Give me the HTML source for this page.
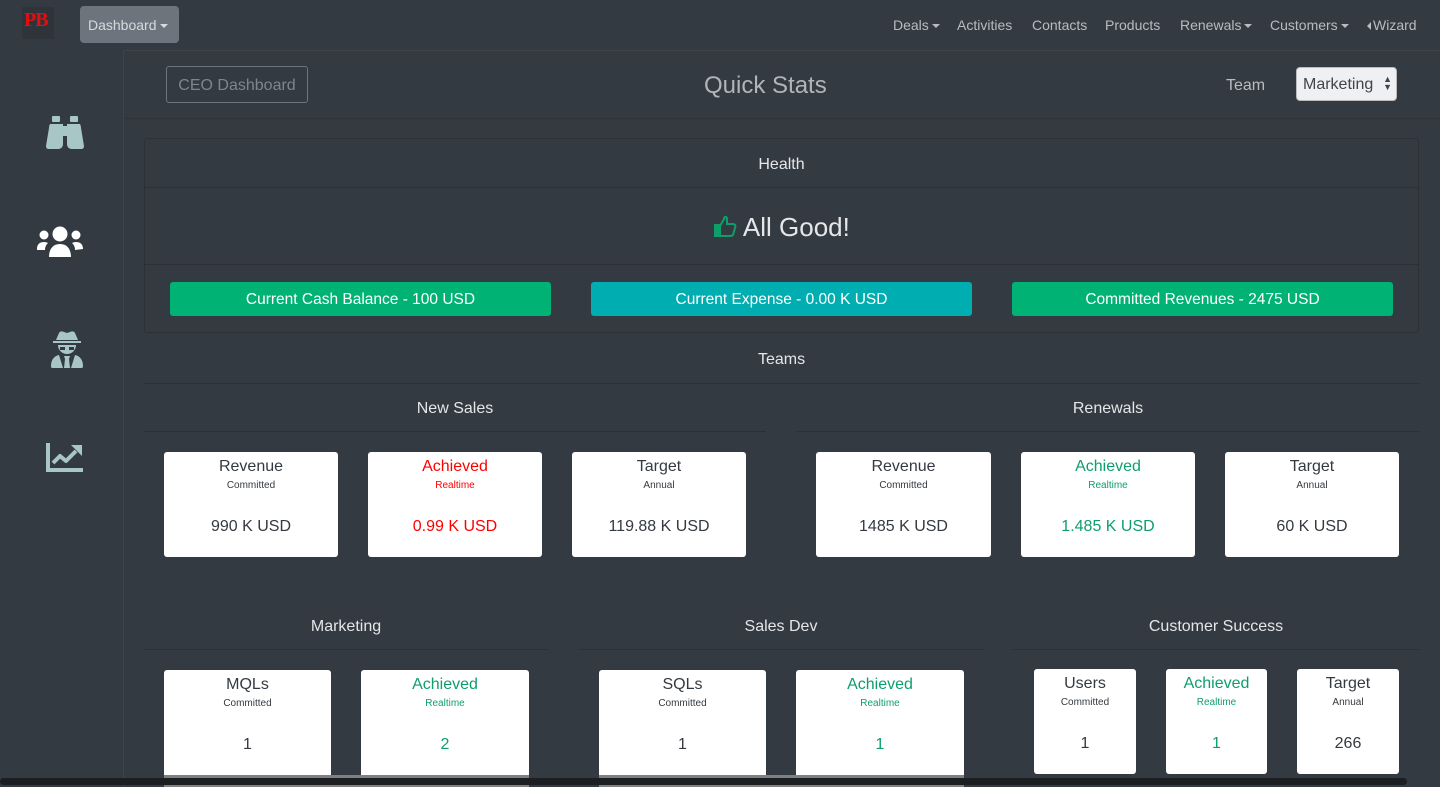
<!DOCTYPE html>
<html><head><meta charset="utf-8"><style>
*{box-sizing:border-box;margin:0;padding:0}
body{width:1440px;height:787px;overflow:hidden;background:#343a42;font-family:"Liberation Sans",sans-serif;color:#e4e6e8;position:relative}
.a{position:absolute}
.nav a{position:absolute;top:17px;font-size:14px;color:#b8bcc0}
.c{text-align:center}
.card{position:absolute;background:#fff;border-radius:3px;text-align:center;color:#343a40}
.card .t{font-size:16px;margin-top:6px;line-height:18px}
.card .s{font-size:10px;margin-top:3px;line-height:13px}
.card .v{font-size:16px;margin-top:26px}
.g{color:#0e9e6a}.r{color:#f00}
.line{position:absolute;height:1px;background:#2b3036}
.btn{position:absolute;height:34px;border-radius:3px;color:#fff;font-size:15.5px;text-align:center;line-height:36px}
.car{display:inline-block;width:0;height:0;border-left:4px solid transparent;border-right:4px solid transparent;border-top:4px solid currentColor;vertical-align:middle;margin-left:3px}
</style></head><body>
<div class="a" style="left:22px;top:7px;width:32px;height:32px;background:#2f343a"></div>
<div class="a" style="left:24px;top:9px;font-family:'Liberation Serif',serif;font-weight:bold;font-size:20px;color:#e01010;letter-spacing:-1px">PB</div>
<div class="a" style="left:80px;top:6px;width:99px;height:37px;background:#6c757d;border-radius:4px;color:#d8dadc;font-size:14px;line-height:38px;padding-left:8px">Dashboard<span class="car"></span></div>
<div class="nav">
<a style="left:893px">Deals<span class="car"></span></a>
<a style="left:957px">Activities</a>
<a style="left:1032px">Contacts</a>
<a style="left:1105px">Products</a>
<a style="left:1180px">Renewals<span class="car"></span></a>
<a style="left:1270px">Customers<span class="car"></span></a>
<a style="left:1367px"><span style="display:inline-block;border-top:4px solid transparent;border-bottom:4px solid transparent;border-right:4px solid #b8bcc0;vertical-align:middle;margin-right:2px"></span>Wizard</a>
</div>
<div class="a" style="left:123px;top:50px;width:1317px;height:1px;background:#3f4449"></div>
<div class="a" style="left:123px;top:50px;width:1px;height:737px;background:#3f4449"></div>
<svg class="a" style="left:46px;top:116px" width="38" height="34" viewBox="0 0 38 34" fill="#a9c6c6"><rect x="6" y="0" width="8" height="6" rx="1"/><rect x="24" y="0" width="8" height="6" rx="1"/><path d="M4 8h13v20c0 3-2 5-5 5H3c-2 0-3-1-3-3l3-18c0-2 1-4 1-4zM21 8h13s1 2 1 4l3 18c0 2-1 3-3 3h-9c-3 0-5-2-5-5z"/><rect x="16" y="10" width="6" height="10"/></svg>
<svg class="a" style="left:37px;top:225px" width="46" height="34" viewBox="0 0 46 34" fill="#fff"><circle cx="23" cy="9" r="7.5"/><circle cx="7" cy="10" r="4.5"/><circle cx="39" cy="10" r="4.5"/><path d="M12 32c0-8 4-13 11-13s11 5 11 13zM0 24c0-5 3-7 7-7 2 0 3 .5 4 1-2 2-3 4-3 7H0zM46 24c0-5-3-7-7-7-2 0-3 .5-4 1 2 2 3 4 3 7z"/></svg>
<svg class="a" style="left:51px;top:331px" width="32" height="37" viewBox="0 0 32 37" fill="#a9c6c6"><path d="M5 9h22l-3-7c-1-2-3-2-5-1l-3 1-3-1c-2-1-4-1-5 1zM2 10h28v2H2z"/><path d="M7 14h18c0 5-4 9-9 9s-9-4-9-9z"/><path d="M2 37c-2 0-2-1-2-2 0-6 3-10 8-11l4 13zM30 37c2 0 2-1 2-2 0-6-3-10-8-11l-4 13zM13 25h6l-1 3 1 9h-6l1-9z"/><rect x="9" y="16" width="5" height="3" fill="#343a42"/><rect x="18" y="16" width="5" height="3" fill="#343a42"/></svg>
<svg class="a" style="left:46px;top:443px" width="37" height="29" viewBox="0 0 37 29"><path d="M2 0v27h35" stroke="#a9c6c6" stroke-width="4" fill="none"/><path d="M7 20l7-7 6 5 10-10" stroke="#a9c6c6" stroke-width="4" fill="none" stroke-linejoin="round"/><path d="M25 2h11v11z" fill="#a9c6c6"/></svg>
<div class="a" style="left:166px;top:66px;width:142px;height:37px;border:1px solid #6c757d;border-radius:3px;color:#7e858c;font-size:16px;line-height:37px;text-align:center">CEO Dashboard</div>
<div class="a" style="left:704px;top:72px;font-size:24px;color:#b0b5ba">Quick Stats</div>
<div class="a" style="left:1226px;top:77px;font-size:16px;color:#b8bcc0">Team</div>
<div class="a" style="left:1296px;top:67px;width:101px;height:34px;background:#eef0f3;border:1px solid #bbb;border-radius:4px;color:#444;font-size:16px;line-height:34px;padding-left:6px">Marketing<span style="position:absolute;right:4px;top:7px;font-size:9px;line-height:8px">▲<br>▼</span></div>
<div class="line" style="left:124px;top:118px;width:1316px;background:#2e3338"></div>
<div class="a" style="left:144px;top:138px;width:1275px;height:195px;border:1px solid #2c3136;border-radius:3px"></div>
<div class="a c" style="left:144px;top:156px;width:1275px;font-size:16px">Health</div>
<div class="line" style="left:144px;top:187px;width:1275px"></div>
<div class="a c" style="left:144px;top:212px;width:1275px;font-size:26px"><svg width="24" height="24" viewBox="0 0 24 24" style="vertical-align:-2px"><path d="M2 11h5v11H2zM7 12l4-7c0-3 3-3 3 0v5h6c2 0 3 2 2 4l-2 7c-1 1-2 1-3 1H7" fill="none" stroke="#0e9e6a" stroke-width="2"/><rect x="2" y="11" width="5" height="11" fill="#0e9e6a"/></svg> All Good!</div>
<div class="line" style="left:144px;top:264px;width:1275px"></div>
<div class="btn" style="left:170px;top:282px;width:381px;background:#00b274">Current Cash Balance - 100 USD</div>
<div class="btn" style="left:591px;top:282px;width:381px;background:#00adb0">Current Expense - 0.00 K USD</div>
<div class="btn" style="left:1012px;top:282px;width:381px;background:#00b274">Committed Revenues - 2475 USD</div>
<div class="a c" style="left:144px;top:351px;width:1275px;font-size:16px">Teams</div>
<div class="line" style="left:144px;top:383px;width:1275px"></div>
<div class="a c" style="left:144px;top:400px;width:622px;font-size:16px">New Sales</div>
<div class="a c" style="left:797px;top:400px;width:622px;font-size:16px">Renewals</div>
<div class="line" style="left:144px;top:431px;width:622px"></div>
<div class="line" style="left:797px;top:431px;width:622px"></div>
<div class="card" style="left:164px;top:452px;width:174px;height:105px"><div class="t">Revenue</div><div class="s">Committed</div><div class="v">990 K USD</div></div>
<div class="card r" style="left:368px;top:452px;width:174px;height:105px"><div class="t">Achieved</div><div class="s">Realtime</div><div class="v">0.99 K USD</div></div>
<div class="card" style="left:572px;top:452px;width:174px;height:105px"><div class="t">Target</div><div class="s">Annual</div><div class="v">119.88 K USD</div></div>
<div class="card" style="left:816px;top:452px;width:175px;height:105px"><div class="t">Revenue</div><div class="s">Committed</div><div class="v">1485 K USD</div></div>
<div class="card g" style="left:1021px;top:452px;width:174px;height:105px"><div class="t">Achieved</div><div class="s">Realtime</div><div class="v">1.485 K USD</div></div>
<div class="card" style="left:1225px;top:452px;width:174px;height:105px"><div class="t">Target</div><div class="s">Annual</div><div class="v">60 K USD</div></div>
<div class="a c" style="left:144px;top:618px;width:404px;font-size:16px">Marketing</div>
<div class="a c" style="left:579px;top:618px;width:404px;font-size:16px">Sales Dev</div>
<div class="a c" style="left:1013px;top:618px;width:406px;font-size:16px">Customer Success</div>
<div class="line" style="left:144px;top:649px;width:404px"></div>
<div class="line" style="left:579px;top:649px;width:404px"></div>
<div class="line" style="left:1013px;top:649px;width:406px"></div>
<div class="card" style="left:164px;top:670px;width:167px;height:110px"><div class="t">MQLs</div><div class="s">Committed</div><div class="v">1</div></div>
<div class="card g" style="left:361px;top:670px;width:168px;height:110px"><div class="t">Achieved</div><div class="s">Realtime</div><div class="v">2</div></div>
<div class="card" style="left:599px;top:670px;width:167px;height:110px"><div class="t">SQLs</div><div class="s">Committed</div><div class="v">1</div></div>
<div class="card g" style="left:796px;top:670px;width:168px;height:110px"><div class="t">Achieved</div><div class="s">Realtime</div><div class="v">1</div></div>
<div class="card" style="left:1034px;top:669px;width:102px;height:105px"><div class="t">Users</div><div class="s">Committed</div><div class="v">1</div></div>
<div class="card g" style="left:1166px;top:669px;width:101px;height:105px"><div class="t">Achieved</div><div class="s">Realtime</div><div class="v">1</div></div>
<div class="card" style="left:1297px;top:669px;width:102px;height:105px"><div class="t">Target</div><div class="s">Annual</div><div class="v">266</div></div>
<div class="a" style="left:164px;top:775px;width:365px;height:12px;background:#808080"></div>
<div class="a" style="left:599px;top:775px;width:365px;height:12px;background:#808080"></div>
<div class="a" style="left:0;top:778px;width:1407px;height:7px;background:#1c1f22;border-radius:4px"></div>
</body></html>
